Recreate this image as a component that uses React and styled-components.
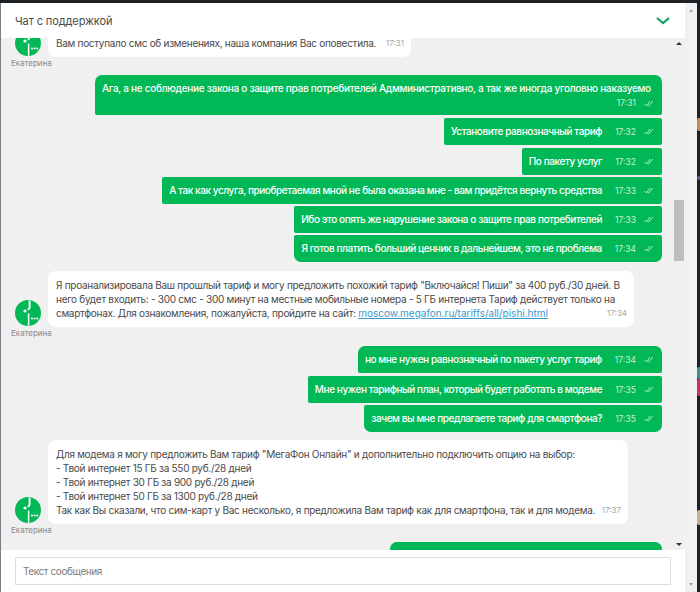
import React from "react";
import styled, { createGlobalStyle } from "styled-components";

const GlobalStyle = createGlobalStyle`
  html, body {
    margin: 0;
    padding: 0;
    background: #1c2126;
  }
  * {
    box-sizing: border-box;
  }
`;

const font = `"Inter", "Noto Sans", "Liberation Sans", sans-serif`;

// зеленый кружок мегафона
const Logo = () => (
  <svg width="26" height="26" viewBox="0 0 26 26">
    <circle cx="13" cy="13" r="13" fill="#00b956" />
    <path d="M14.6 0.5V7.5c0 1.2-.9 1.8-2 2" stroke="#fff" strokeWidth="1.9" fill="none" />
    <path d="M13.6 13.5V25.8" stroke="#fff" strokeWidth="1.5" fill="none" />
    <circle cx="10" cy="11" r="1.6" fill="#fff" />
    <circle cx="17" cy="18.5" r="1" fill="#fff" />
    <circle cx="19.6" cy="18.5" r="1" fill="#fff" />
    <circle cx="22.2" cy="18.5" r="1" fill="#fff" />
  </svg>
);

const Ticks = () => (
  <svg width="10" height="7" viewBox="0 0 10 7" fill="none" stroke="#c6efd8" strokeWidth="0.9">
    <path d="M0.5 4l2 2 3.5-5" />
    <path d="M4 5.6l.5.4L8.8 1" />
  </svg>
);

const Incoming = ({ children, time, width, top, bottom }) => (
  <IncomingRow $top={top} $bottom={bottom}>
    <Agent>
      <Logo />
      <AgentName>Екатерина</AgentName>
    </Agent>
    <IncomingBubble $width={width}>
      <BubbleText>{children}</BubbleText>
      <TimeGray>{time}</TimeGray>
    </IncomingBubble>
  </IncomingRow>
);

const Outgoing = ({ text, time, top, width, first, last }) => (
  <OutgoingBubble $top={top} $width={width} $first={first} $last={last}>
    <OutText $wide={!!width}>{text}</OutText>
    <OutMeta>
      <span>{time}</span>
      <Ticks />
    </OutMeta>
  </OutgoingBubble>
);

const App = () => {
  return (
    <Screen>
      <GlobalStyle />
      <Panel>
        <Header>
          <Title>Чат с поддержкой</Title>
          <svg width="14" height="8" viewBox="0 0 14 8" fill="none" stroke="#12a05c" strokeWidth="2.2">
            <path d="M1 1l6 5 6-5" />
          </svg>
        </Header>
        <Body>
          <Thread>
            <Incoming time="17:31" top={0} bottom={18} width={363}>
              Вам поступало смс об изменениях, наша компания Вас оповестила.
            </Incoming>
            <Outgoing
              first
              width={567}
              text="Ага, а не соблюдение закона о защите прав потребителей Адмминистративно, а так же иногда уголовно наказуемо"
              time="17:31"
            />
            <Outgoing top={3} text="Установите равнозначный тариф" time="17:32" />
            <Outgoing top={3} text="По пакету услуг" time="17:32" />
            <Outgoing
              top={2}
              text="А так как услуга, приобретаемая мной не была оказана мне - вам придётся вернуть средства"
              time="17:33"
            />
            <Outgoing
              top={2}
              text="Ибо это опять же нарушение закона о защите прав потребителей"
              time="17:33"
            />
            <Outgoing
              top={2}
              last
              text="Я готов платить больший ценник в дальнейшем, это не проблема"
              time="17:34"
            />
            <Incoming time="17:34" top={9} bottom={19} width={586}>
              Я проанализировала Ваш прошлый тариф и могу предложить похожий тариф "Включайся! Пиши" за 400 руб./30
              дней. В<br />
              него будет входить: - 300 смс - 300 минут на местные мобильные номера - 5 ГБ интернета Тариф действует
              только на
              <br />
              смартфонах. Для ознакомления, пожалуйста, пройдите на сайт:{" "}
              <SiteLink>moscow.megafon.ru/tariffs/all/pishi.html</SiteLink>
            </Incoming>
            <Outgoing first text="но мне нужен равнозначный по пакету услуг тариф" time="17:34" />
            <Outgoing top={3} text="Мне нужен тарифный план, который будет работать в модеме" time="17:35" />
            <Outgoing top={2} last text="зачем вы мне предлагаете тариф для смартфона?" time="17:35" />
            <Incoming time="17:37" top={8} bottom={18} width={580}>
              Для модема я могу предложить Вам тариф "МегаФон Онлайн" и дополнительно подключить опцию на выбор:
              <br />- Твой интернет 15 ГБ за 550 руб./28 дней
              <br />- Твой интернет 30 ГБ за 900 руб./28 дней
              <br />- Твой интернет 50 ГБ за 1300 руб./28 дней
              <br />Так как Вы сказали, что сим-карт у Вас несколько, я предложила Вам тариф как для смартфона, так и
              для модема.
            </Incoming>
            <LastBubble />
          </Thread>
          <InnerScroll>
            <ArrowUp />
            <ScrollTrack>
              <ScrollThumb />
            </ScrollTrack>
            <ArrowDown />
          </InnerScroll>
        </Body>
        <Footer>
          <MessageInput placeholder="Текст сообщения" />
        </Footer>
      </Panel>
      <PageScroll>
        <PageArrowUp />
        <PageArrowDown />
      </PageScroll>
      <DesktopEdge>
        <EdgeMark $top={115} $height={13} $color="#c98a55" />
        <EdgeMark $top={45} $height={4} $color="#6a5a86" />
        <EdgeMark $top={187} $height={12} $color="#3f8f93" />
        <EdgeMark $top={0} $height={17} $color="#d62c68" />
        <EdgeMark $top={114} $height={15} $color="#c9b08e" />
      </DesktopEdge>
    </Screen>
  );
};

export default App;

const Screen = styled.div`
  display: flex;
  width: 700px;
  height: 592px;
  padding-top: 3px;
  background: #1c2126;
  overflow: hidden;
  font-family: ${font};
`;
const Panel = styled.div`
  display: flex;
  flex-direction: column;
  flex-shrink: 0;
  width: 685px;
  height: 100%;
  border-left: 1px solid #7b7f83;
  background: #ffffff;
`;
const Header = styled.div`
  display: flex;
  align-items: center;
  justify-content: space-between;
  flex-shrink: 0;
  height: 35px;
  padding: 0 15px 0 14px;
  background: #ffffff;
`;
const Title = styled.span`
  font-size: 11px;
  line-height: 16px;
  letter-spacing: -0.1px;
  color: #4a4a4a;
`;
const Body = styled.div`
  display: flex;
  flex: 1;
  min-height: 0;
  background: #f0f0f1;
  overflow: hidden;
`;
const Thread = styled.div`
  display: flex;
  flex-direction: column;
  align-items: flex-end;
  flex: 1;
  min-width: 0;
  margin-top: -9px;
  padding: 0 11px 0 14px;
`;
const IncomingRow = styled.div`
  display: flex;
  align-items: flex-end;
  align-self: flex-start;
  flex-shrink: 0;
  margin-top: ${(props) => props.$top}px;
  margin-bottom: ${(props) => props.$bottom}px;
`;
const Agent = styled.div`
  display: flex;
  flex-direction: column;
  align-items: flex-start;
  flex-shrink: 0;
  width: 33px;
  margin-bottom: -11px;
`;
const AgentName = styled.span`
  margin-left: -4px;
  margin-top: 2px;
  font-size: 8px;
  line-height: 10px;
  color: #8a8a8a;
  white-space: nowrap;
`;
const IncomingBubble = styled.div`
  display: block;
  width: ${(props) => props.$width}px;
  padding: 7px 7px 7px 8px;
  border-radius: 8px;
  background: #ffffff;
  font-size: 10px;
  line-height: 14px;
`;
const BubbleText = styled.span`
  letter-spacing: -0.28px;
  color: #4a4a4a;
`;
const SiteLink = styled.span`
  letter-spacing: 0;
  color: #3b97cf;
  text-decoration: underline;
`;
const TimeGray = styled.span`
  float: right;
  margin-left: 4px;
  font-size: 8px;
  line-height: 14px;
  color: #a4a4a4;
`;
const OutgoingBubble = styled.div`
  display: flex;
  flex-shrink: 0;
  flex-wrap: ${(props) => (props.$width ? "wrap" : "nowrap")};
  justify-content: flex-end;
  align-items: center;
  column-gap: 13px;
  ${(props) => props.$width && `width: ${props.$width}px;`}
  margin-top: ${(props) => props.$top || 0}px;
  padding: 6px 8px ${(props) => (props.$width ? 5 : 6)}px 7px;
  border-radius: ${(props) => (props.$first ? "7px 7px" : "2px 2px")} ${(props) => (props.$last ? "7px 7px" : "2px 2px")};
  background: #00b956;
`;
const OutText = styled.span`
  ${(props) => props.$wide && "width: 100%;"}
  font-size: 10px;
  line-height: 15px;
  font-weight: 500;
  letter-spacing: ${(props) => (props.$wide ? "-0.28px" : "-0.42px")};
  color: #ffffff;
  white-space: nowrap;
`;
const OutMeta = styled.span`
  display: inline-flex;
  align-items: center;
  gap: 8px;
  font-size: 8.5px;
  line-height: 14px;
  color: #c6efd8;
`;
const LastBubble = styled.div`
  flex-shrink: 0;
  width: 272px;
  height: 40px;
  border-radius: 7px 7px 0 0;
  background: #00b956;
`;
const InnerScroll = styled.div`
  display: flex;
  flex-direction: column;
  align-items: center;
  flex-shrink: 0;
  width: 12px;
  padding: 4px 0;
`;
const ScrollTrack = styled.div`
  flex: 1;
  width: 100%;
  padding: 155px 1px 0;
`;
const ScrollThumb = styled.div`
  height: 61px;
  background: #bdbdbd;
`;
const ArrowUp = styled.div`
  width: 0;
  height: 0;
  border-left: 3px solid transparent;
  border-right: 3px solid transparent;
  border-bottom: 3px solid #333333;
`;
const ArrowDown = styled(ArrowUp)`
  transform: rotate(180deg);
`;
const Footer = styled.div`
  display: flex;
  align-items: center;
  flex-shrink: 0;
  height: 42px;
  padding: 0 14px 0 14px;
  background: #ffffff;
`;
const MessageInput = styled.input`
  width: 100%;
  height: 28px;
  padding: 0 7px;
  border: 1px solid #dcdcdc;
  outline: none;
  background: #ffffff;
  font-family: ${font};
  font-size: 10px;
  letter-spacing: -0.4px;
  &::placeholder {
    color: #7c7c7c;
    opacity: 1;
  }
`;
const PageScroll = styled.div`
  display: flex;
  flex-direction: column;
  justify-content: space-between;
  align-items: center;
  flex-shrink: 0;
  width: 12px;
  padding: 6px 0;
  background: #f1f1f1;
`;
const PageArrowUp = styled.div`
  width: 0;
  height: 0;
  border-left: 2.5px solid transparent;
  border-right: 2.5px solid transparent;
  border-bottom: 3px solid #a5a5a5;
`;
const PageArrowDown = styled(PageArrowUp)`
  transform: rotate(180deg);
`;
// край рабочего стола справа
const DesktopEdge = styled.div`
  display: flex;
  flex-direction: column;
  flex: 1;
`;
const EdgeMark = styled.div`
  flex-shrink: 0;
  height: ${(props) => props.$height}px;
  margin-top: ${(props) => props.$top}px;
  border-radius: 2px 0 0 2px;
  background: ${(props) => props.$color};
`;
